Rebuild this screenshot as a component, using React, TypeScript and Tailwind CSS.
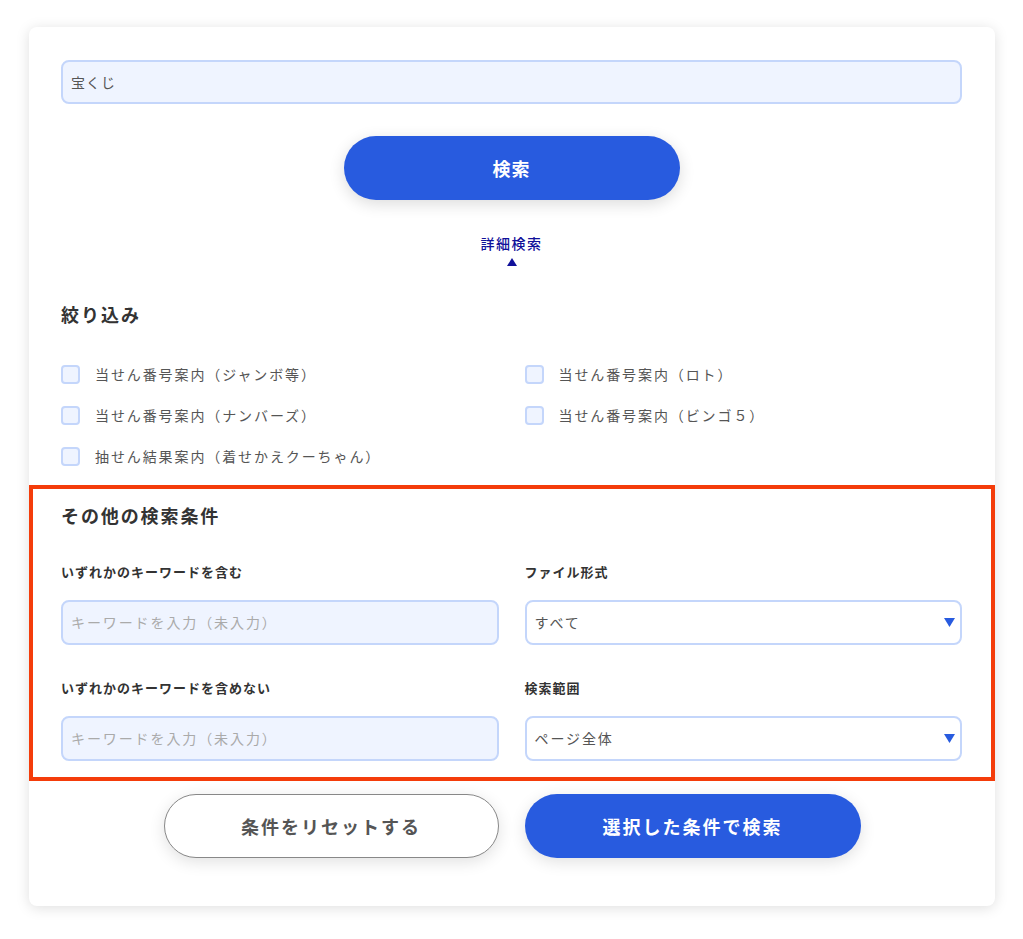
import React from 'react';

const font = { fontFamily: '"Noto Sans CJK JP", "Noto Sans", sans-serif' };

const checks = [
  '当せん番号案内（ジャンボ等）',
  '当せん番号案内（ロト）',
  '当せん番号案内（ナンバーズ）',
  '当せん番号案内（ビンゴ５）',
  '抽せん結果案内（着せかえクーちゃん）',
];

const Check = ({ label }: { label: string }) => (
  <label className="flex items-center h-[41px]">
    <span className="w-[19px] h-[19px] rounded-[4px] border-2 border-[#c4d6fb] bg-[#eff4ff] shrink-0"></span>
    <span className="ml-[15px] text-[14px] tracking-[1.9px] text-[#555]">{label}</span>
  </label>
);

const TextField = ({ placeholder }: { placeholder: string }) => (
  <div className="h-[45px] rounded-lg border-2 border-[#c4d6fb] bg-[#eff4ff] flex items-center px-[8px]">
    <span className="text-[14px] tracking-[1.9px] text-[#aaa]">{placeholder}</span>
  </div>
);

const SelectField = ({ value }: { value: string }) => (
  <div className="h-[45px] rounded-lg border-2 border-[#c4d6fb] bg-white flex items-center justify-between pl-[8px] pr-[5px]">
    <span className="text-[14px] tracking-[1.9px] text-[#555]">{value}</span>
    <svg width="11" height="9" viewBox="0 0 11 9">
      <polygon points="0,0 11,0 5.5,9" fill="#285bdf" />
    </svg>
  </div>
);

const FieldLabel = ({ children }: { children: React.ReactNode }) => (
  <div className="text-[13px] leading-[20px] font-bold tracking-[1px] text-[#333]">{children}</div>
);

export default function App() {
  return (
    <div className="min-h-[939px] bg-white pt-[27px] pb-[33px]" style={font}>
      <div className="ml-[29px] w-[966px] bg-white rounded-lg shadow-[0_2px_14px_rgba(0,0,0,0.13)] pt-[33px] pb-[48px]">
        <div className="px-[32px] pr-[33px]">
          {/* keyword */}
          <div className="h-[44px] rounded-lg border-2 border-[#c4d6fb] bg-[#eff4ff] flex items-center px-[8px]">
            <span className="text-[14px] tracking-[1px] text-[#555]">宝くじ</span>
          </div>

          <div className="flex justify-center mt-[32px]">
            <button className="w-[336px] h-[64px] rounded-full bg-[#285bdf] text-white text-[18px] font-bold tracking-[1px] shadow-[0_4px_16px_rgba(0,0,0,0.14)]">
              検索
            </button>
          </div>

          <div className="flex flex-col items-center mt-[33px]">
            <div className="text-[14px] leading-[20px] tracking-[1.5px] text-[#10109a] font-medium">詳細検索</div>
            <svg className="mt-[5px]" width="10" height="8" viewBox="0 0 10 8">
              <polygon points="5,0 10,8 0,8" fill="#10109a" />
            </svg>
          </div>

          <h2 className="mt-[35px] text-[18px] leading-[26px] font-bold tracking-[2px] text-[#333]">絞り込み</h2>

          <div className="mt-[27px] grid grid-cols-2 gap-x-[26px]">
            {checks.map((c) => (
              <Check key={c} label={c} />
            ))}
          </div>
        </div>

        {/* highlighted section */}
        <div className="mt-[8px] border-4 border-[#f43c0a] pt-[13px] pb-[16px] pl-[28px] pr-[29px]">
          <h2 className="text-[18px] leading-[26px] font-bold tracking-[1.9px] text-[#333]">その他の検索条件</h2>
          <div className="grid grid-cols-2 gap-x-[26px]">
            <div>
              <div className="mt-[34px]"><FieldLabel>いずれかのキーワードを含む</FieldLabel></div>
              <div className="mt-[18px]"><TextField placeholder="キーワードを入力（未入力）" /></div>
            </div>
            <div>
              <div className="mt-[34px]"><FieldLabel>ファイル形式</FieldLabel></div>
              <div className="mt-[18px]"><SelectField value="すべて" /></div>
            </div>
            <div>
              <div className="mt-[33px]"><FieldLabel>いずれかのキーワードを含めない</FieldLabel></div>
              <div className="mt-[18px]"><TextField placeholder="キーワードを入力（未入力）" /></div>
            </div>
            <div>
              <div className="mt-[33px]"><FieldLabel>検索範囲</FieldLabel></div>
              <div className="mt-[18px]"><SelectField value="ページ全体" /></div>
            </div>
          </div>
        </div>

        <div className="mt-[13px] flex justify-center gap-[26px]">
          <button className="w-[335px] h-[64px] rounded-full bg-white border border-[#888] text-[#555] text-[18px] font-bold tracking-[2px] shadow-[0_4px_16px_rgba(0,0,0,0.12)]">
            条件をリセットする
          </button>
          <button className="w-[336px] h-[64px] rounded-full bg-[#285bdf] text-white text-[18px] font-bold tracking-[2px] shadow-[0_4px_16px_rgba(0,0,0,0.12)]">
            選択した条件で検索
          </button>
        </div>
      </div>
    </div>
  );
}
